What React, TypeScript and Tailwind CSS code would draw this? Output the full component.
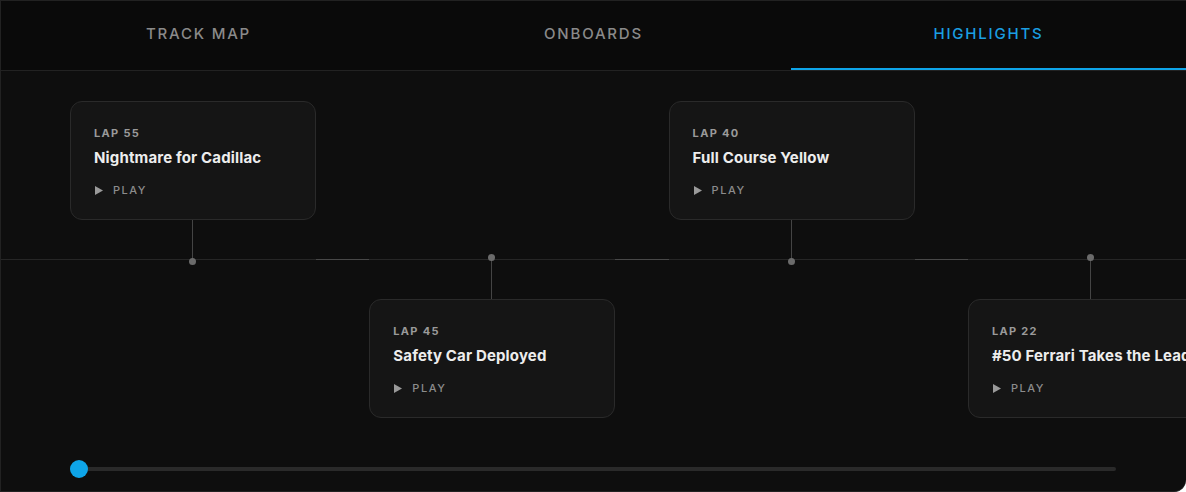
import React, { useState } from 'react';

type Highlight = { lap: number; title: string; pos: 'top' | 'bottom' };

const highlights: Highlight[] = [
    { lap: 55, title: 'Nightmare for Cadillac', pos: 'top' },
    { lap: 45, title: 'Safety Car Deployed', pos: 'bottom' },
    { lap: 40, title: 'Full Course Yellow', pos: 'top' },
    { lap: 22, title: '#50 Ferrari Takes the Lead', pos: 'bottom' },
];

const tabs = ['Track Map', 'Onboards', 'Highlights'];

const HighlightCard = ({ item }: { item: Highlight }) => (
    <div className="h-[119px] w-[246px] shrink-0 rounded-xl border border-[#2a2a2a] bg-[#151515] pl-[23px] pt-[23px]">
        <div className="text-[11px] font-bold uppercase leading-4 tracking-[0.12em] text-[#9a9a9a]">Lap {item.lap}</div>
        <div className="mt-[7px] whitespace-nowrap text-[15px] font-bold leading-5 tracking-[0.01em] text-[#ededed]">{item.title}</div>
        <button className="mt-[14px] flex items-center gap-[10px] text-[11px] font-medium uppercase leading-4 tracking-[0.14em] text-[#8c8c8c]">
            <svg width="8" height="9" viewBox="0 0 8 9" className="ml-px shrink-0">
                <path d="M0 0 L8 4.5 L0 9 Z" fill="#9a9a9a" />
            </svg>
            Play
        </button>
    </div>
);

const Column = ({ item }: { item: Highlight }) => {
    const top = item.pos === 'top';
    return (
        <div className="flex w-[246px] shrink-0 flex-col">
            <div className="flex h-[158px] flex-col">
                {top && (
                    <>
                        <HighlightCard item={item} />
                        <div className="ml-[122px] w-px flex-1 bg-[#444]" />
                    </>
                )}
            </div>
            <div className="relative h-px bg-[#262626]">
                <span className={`absolute left-[119px] h-[7px] w-[7px] rounded-full bg-[#6b6b6b] ${top ? 'top-[-1px]' : 'top-[-5px]'}`} />
            </div>
            <div className="flex h-[158px] flex-col">
                {!top && (
                    <>
                        <div className="ml-[122px] w-px flex-1 bg-[#444]" />
                        <HighlightCard item={item} />
                    </>
                )}
            </div>
        </div>
    );
};

const Gap = () => (
    <div className="flex w-[53.3px] shrink-0 flex-col">
        <div className="h-[158px]" />
        <div className="h-px bg-[#484848]" />
    </div>
);

export default function App() {
    const [active, setActive] = useState(2);

    return (
        <div className="h-[492px] w-full overflow-hidden rounded-br-xl border-b border-l border-t border-[#222] bg-[#0e0e0e] font-['Inter','Liberation_Sans',sans-serif]">
            <div className="flex h-[70px] border-b border-[#222] bg-[#0a0a0a]">
                {tabs.map((tab, i) => (
                    <button
                        key={tab}
                        onClick={() => setActive(i)}
                        className={`relative flex flex-1 items-center justify-center pb-[3px] text-[15px] font-medium uppercase tracking-[0.12em] ${active === i ? 'text-[#1a9fe2]' : 'text-[#8a8a8a]'}`}
                    >
                        {tab}
                        {active === i && <span className="absolute bottom-0 left-0 right-0 h-[2px] bg-[#0ea5e9]" />}
                    </button>
                ))}
            </div>

            <div className="flex overflow-hidden pt-[30px]">
                <div className="flex w-[69px] shrink-0 flex-col">
                    <div className="h-[158px]" />
                    <div className="h-px bg-[#262626]" />
                </div>
                {highlights.map((item, i) => (
                    <React.Fragment key={item.lap}>
                        {i > 0 && <Gap />}
                        <Column item={item} />
                    </React.Fragment>
                ))}
            </div>

            <div className="ml-[69px] mr-[70px] mt-[42px] flex h-[18px] items-center">
                <div className="relative h-[4px] w-full rounded-full bg-[#2a2a2a]">
                    <span className="absolute left-0 top-1/2 h-[18px] w-[18px] -translate-y-1/2 rounded-full bg-[#0ea5e9]" />
                </div>
            </div>
        </div>
    );
}
